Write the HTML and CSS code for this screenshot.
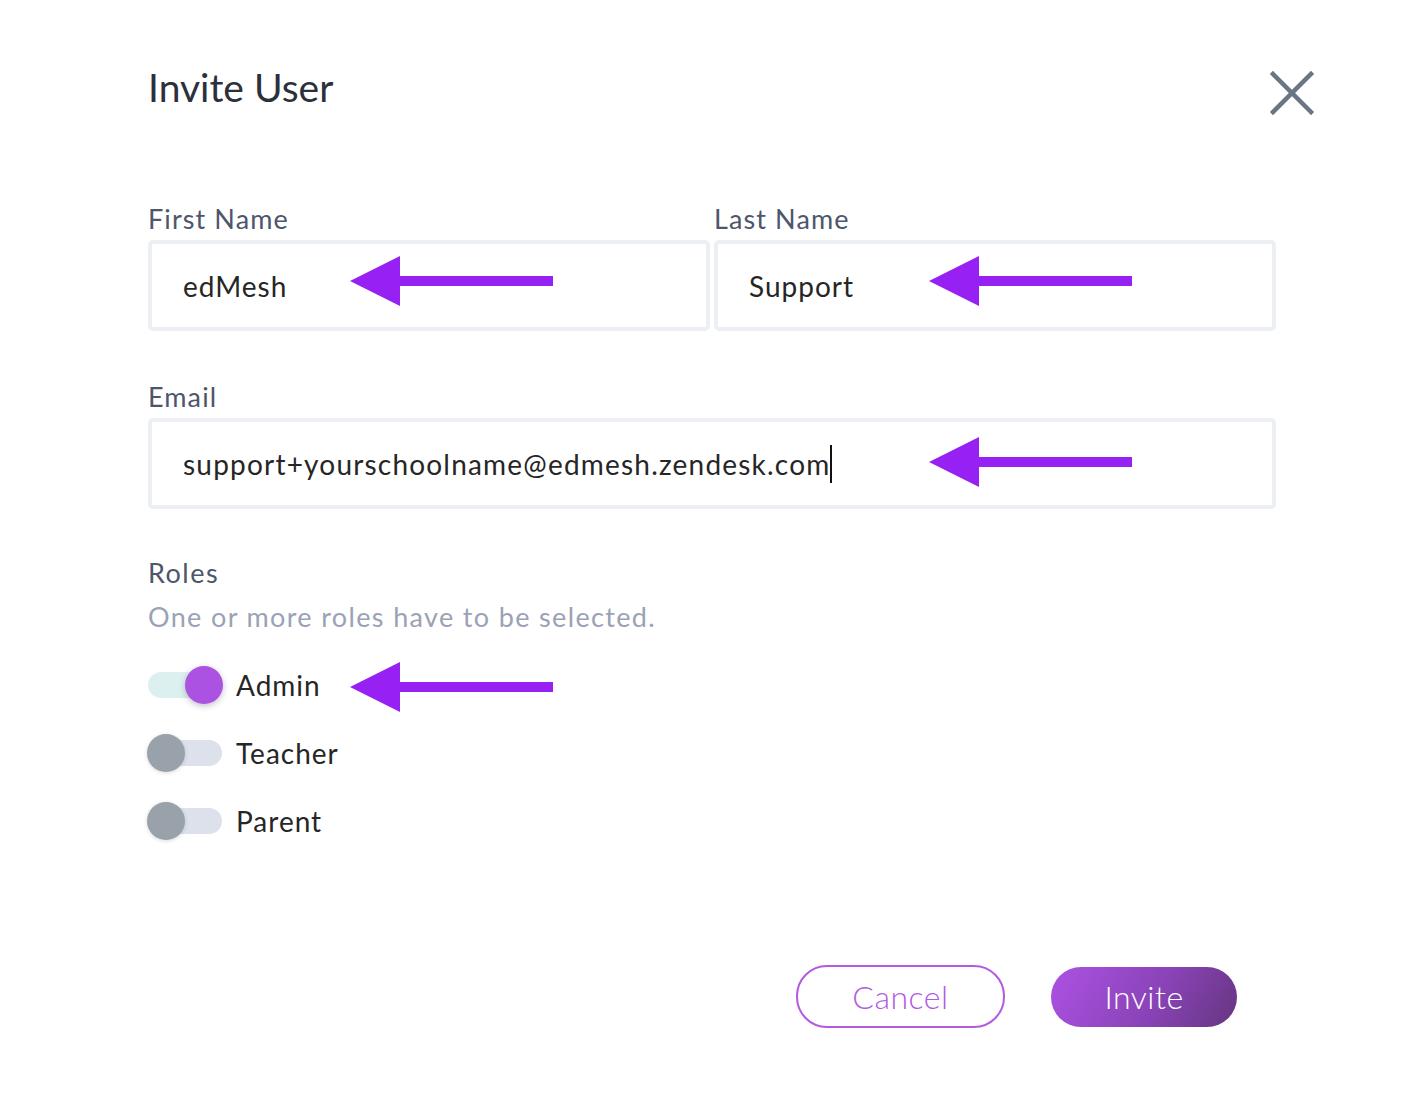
FILE: index.html
```html
<!DOCTYPE html>
<html lang="en">
<head>
    <meta charset="UTF-8">
    <meta name="viewport" content="width=device-width, initial-scale=1.0">
    <title>Invite User</title>
    <link rel="stylesheet" href="styles.css">
</head>
<body>
    <div class="modal">
        <!-- Header -->
        <div class="modal-header">
            <h2>Invite User</h2>
            <button type="button" class="close-btn" aria-label="Close">
                <svg width="46" height="46" viewBox="0 0 46 46">
                    <path d="M4 4 L42 42 M42 4 L4 42" stroke="#6b7684" stroke-width="4.5" stroke-linecap="square"/>
                </svg>
            </button>
        </div>

        <form class="invite-form">
            <!-- Name Fields -->
            <div class="name-row">
                <div class="field">
                    <label for="firstName">First Name</label>
                    <div class="input-wrap">
                        <input type="text" id="firstName" value="edMesh">
                        <svg class="arrow" width="204" height="52" viewBox="0 0 204 52"><path d="M0 26 L50 1 L50 21 L203 21 L203 31 L50 31 L50 51 Z" fill="#9621f2"/></svg>
                    </div>
                </div>
                <div class="field">
                    <label for="lastName">Last Name</label>
                    <div class="input-wrap">
                        <input type="text" id="lastName" value="Support">
                        <svg class="arrow arrow-last" width="204" height="52" viewBox="0 0 204 52"><path d="M0 26 L50 1 L50 21 L203 21 L203 31 L50 31 L50 51 Z" fill="#9621f2"/></svg>
                    </div>
                </div>
            </div>

            <!-- Email -->
            <div class="field">
                <label for="email">Email</label>
                <div class="input-wrap">
                    <div class="input-box email-box" id="email">support+yourschoolname@edmesh.zendesk.com<span class="caret"></span></div>
                    <svg class="arrow arrow-email" width="204" height="52" viewBox="0 0 204 52"><path d="M0 26 L50 1 L50 21 L203 21 L203 31 L50 31 L50 51 Z" fill="#9621f2"/></svg>
                </div>
            </div>

            <!-- Roles -->
            <div class="roles">
                <h3>Roles</h3>
                <p class="hint">One or more roles have to be selected.</p>
                <div class="role-list">
                    <div class="role on">
                        <span class="toggle"><span class="knob"></span></span>
                        <span class="role-name">Admin</span>
                        <svg class="arrow arrow-role" width="204" height="52" viewBox="0 0 204 52"><path d="M0 26 L50 1 L50 21 L203 21 L203 31 L50 31 L50 51 Z" fill="#9621f2"/></svg>
                    </div>
                    <div class="role">
                        <span class="toggle"><span class="knob"></span></span>
                        <span class="role-name">Teacher</span>
                    </div>
                    <div class="role">
                        <span class="toggle"><span class="knob"></span></span>
                        <span class="role-name">Parent</span>
                    </div>
                </div>
            </div>

            <!-- Buttons -->
            <div class="bottom-buttons">
                <button type="button" class="btn-cancel">Cancel</button>
                <button type="submit" class="btn-invite">Invite</button>
            </div>
        </form>
    </div>
</body>
</html>
```
FILE: styles.css
```css
/* General Styles */
* {
    margin: 0;
    padding: 0;
    box-sizing: border-box;
}
body {
    font-family: Lato, "Noto Sans", sans-serif;
    background: #ffffff;
    color: #222;
}
.modal {
    width: 1128px;
    margin-left: 148px;
    padding-top: 64px;
}
.modal-header {
    display: flex;
    justify-content: space-between;
    align-items: flex-start;
    height: 138px;
}
.modal-header h2 {
    font-size: 39px;
    font-weight: 400;
    color: #2b303b;
}
.close-btn {
    background: none;
    border: none;
    margin-right: -39px;
    margin-top: 6px;
    cursor: pointer;
}

/* Fields */
.name-row {
    display: grid;
    grid-template-columns: 1fr 1fr;
    gap: 4px;
}
.field label {
    display: block;
    font-size: 27px;
    color: #4d566a;
    height: 38px;
    letter-spacing: 1.1px;
}
.input-wrap {
    position: relative;
}
.field input,
.input-box {
    width: 100%;
    height: 91px;
    border: 4px solid #eceff4;
    border-radius: 5px;
    padding: 0 31px;
    font-family: inherit;
    font-size: 28px;
    color: #262626;
    outline: none;
    letter-spacing: 1px;
}
.input-box {
    display: flex;
    align-items: center;
}
.email-box {
    letter-spacing: 1.2px;
}
.caret {
    display: inline-block;
    width: 2px;
    height: 38px;
    background: #111;
}
.invite-form > .field {
    margin-top: 49px;
}

/* Annotation arrows */
.arrow {
    position: absolute;
    left: 202px;
    top: 15px;
}
.arrow-last {
    left: 215px;
}
.arrow-email {
    left: 781px;
    top: 18px;
}
.arrow-role {
    left: 202px;
    top: -5px;
}

/* Roles */
.roles {
    margin-top: 47px;
}
.roles h3 {
    font-size: 27px;
    font-weight: 400;
    color: #4d566a;
    height: 44px;
    letter-spacing: 1.5px;
}
.hint {
    font-size: 27px;
    color: #9aa2b5;
    letter-spacing: 1.35px;
}
.role-list {
    margin-top: 33px;
    display: flex;
    flex-direction: column;
    gap: 30px;
}
.role {
    position: relative;
    display: flex;
    align-items: center;
    gap: 14px;
    height: 38px;
}
.toggle {
    position: relative;
    width: 74px;
    height: 26px;
    border-radius: 13px;
    background: #dde1eb;
}
.knob {
    position: absolute;
    top: -6px;
    left: -1px;
    width: 38px;
    height: 38px;
    border-radius: 50%;
    background: #99a1ab;
    box-shadow: 0 1px 4px rgba(0, 0, 0, 0.15);
}
.role.on .toggle {
    background: #dcf1ef;
}
.role.on .knob {
    left: 37px;
    background: #ab52e2;
    box-shadow: 0 2px 6px rgba(60, 40, 80, 0.3);
}
.role-name {
    font-size: 28px;
    color: #262626;
    letter-spacing: 1px;
}

/* Buttons */
.bottom-buttons {
    display: flex;
    justify-content: flex-end;
    align-items: center;
    gap: 46px;
    margin-top: 125px;
    padding-right: 39px;
}
.bottom-buttons button {
    font-family: inherit;
    font-size: 32px;
    font-weight: 300;
    border-radius: 31px;
    cursor: pointer;
    letter-spacing: 0.5px;
}
.btn-cancel {
    width: 209px;
    height: 63px;
    background: #fff;
    border: 2px solid #b35ae2;
    color: #b35ae2;
}
.btn-invite {
    width: 186px;
    height: 60px;
    border: none;
    color: #fff;
    background: linear-gradient(120deg, #ad52e4 0%, #8a43b8 55%, #653680 100%);
}
```
